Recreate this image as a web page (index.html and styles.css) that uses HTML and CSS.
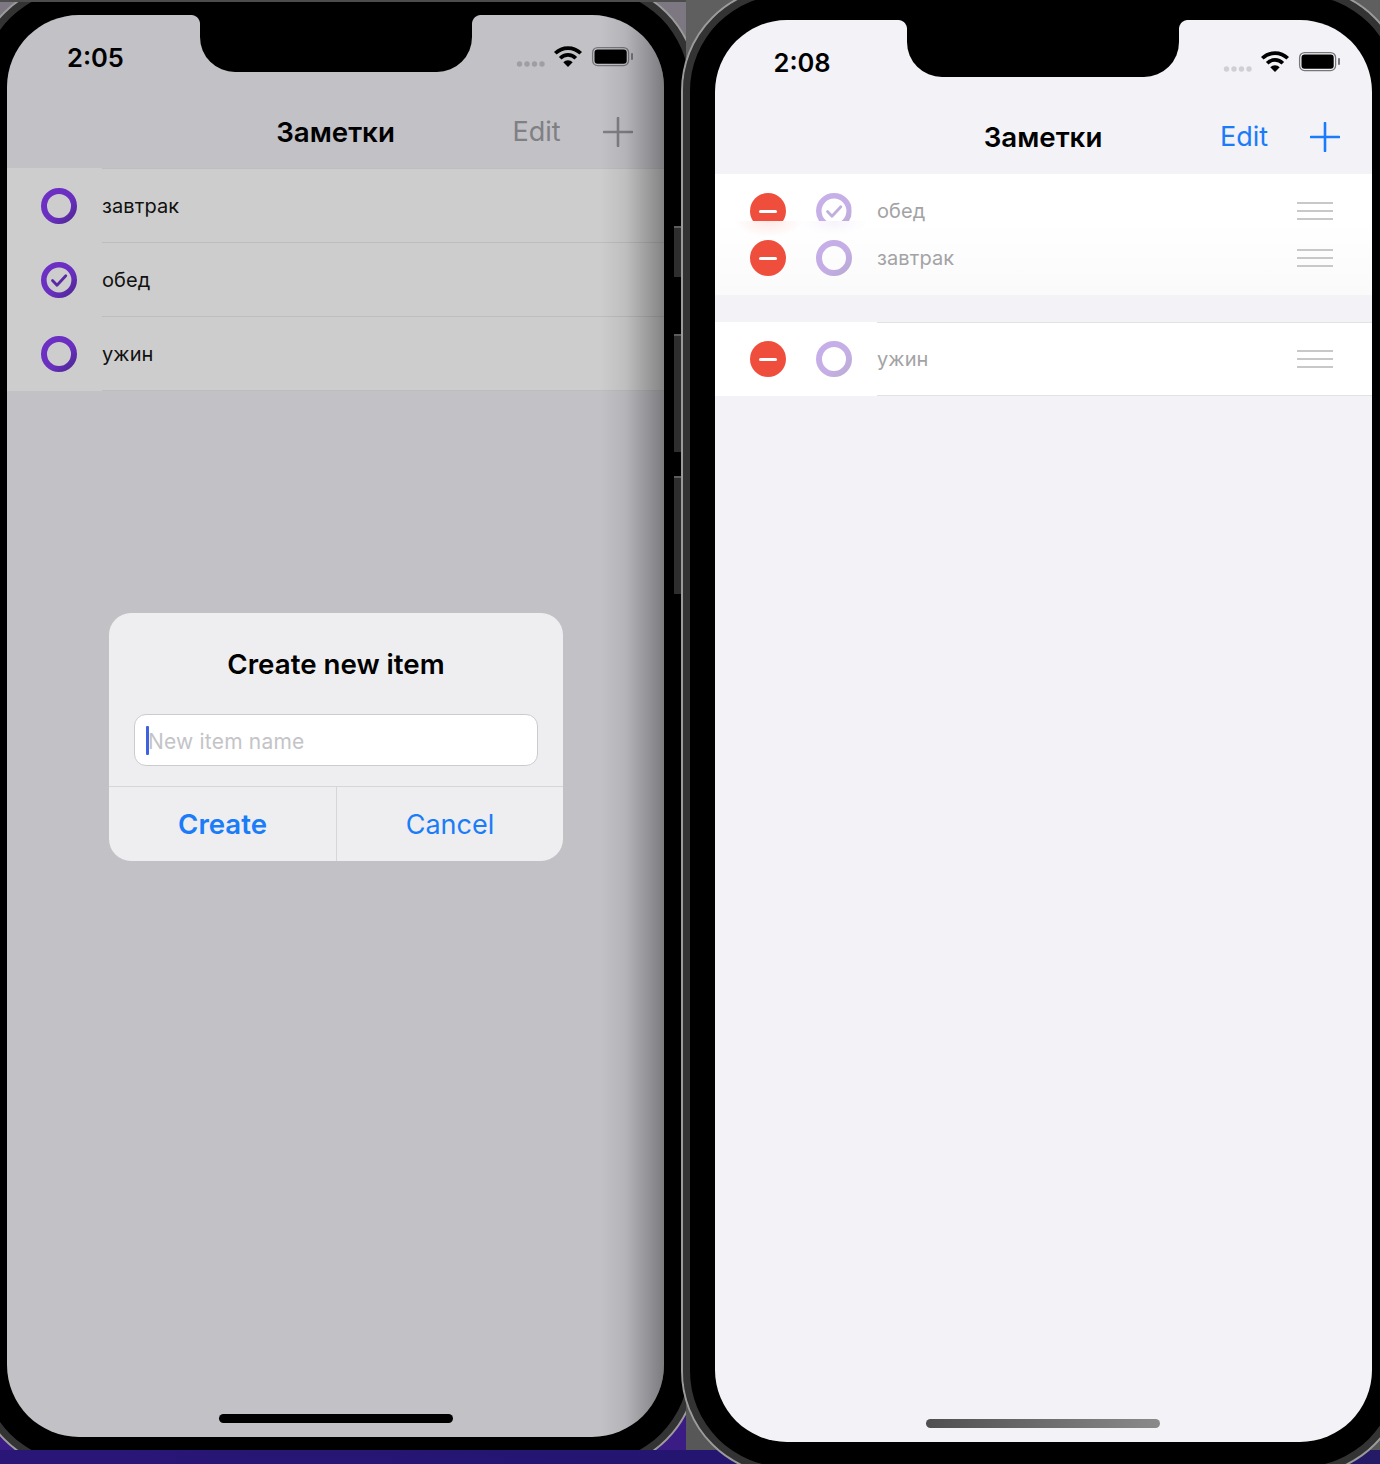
FILE: index.html
```html
<!DOCTYPE html>
<html lang="ru">
<head>
<meta charset="utf-8">
<title>Заметки</title>
<link rel="stylesheet" href="styles.css">
</head>
<body>
<svg class="defs" width="0" height="0" aria-hidden="true">
  <defs>
    <linearGradient id="ringPaint" x1="0.1" y1="0.1" x2="0.9" y2="0.9">
      <stop offset="0" stop-color="#6c30c4"/>
      <stop offset="0.6" stop-color="#6a2fc0"/>
      <stop offset="1" stop-color="#55299f"/>
    </linearGradient>
    <symbol id="ring" viewBox="0 0 36 36">
      <circle cx="18" cy="18" r="15" fill="none" stroke="url(#ringPaint)" stroke-width="6"/>
    </symbol>
    <symbol id="ringCheck" viewBox="0 0 36 36">
      <circle cx="18" cy="18" r="15.2" fill="none" stroke="url(#ringPaint)" stroke-width="5.6"/>
      <path d="M11.5 18.5L16 23.2L24.8 13.8" fill="none" stroke="#5a2aa6" stroke-width="2.8" stroke-linecap="round" stroke-linejoin="round"/>
    </symbol>
    <symbol id="plus" viewBox="0 0 30 30">
      <path d="M15 1V29M1 15H29" fill="none" stroke="currentColor" stroke-width="2.6" stroke-linecap="round"/>
    </symbol>
    <symbol id="status" viewBox="0 0 120 24">
      <g fill="currentColor">
        <circle cx="5.5" cy="20" r="2.7"/>
        <circle cx="13" cy="20" r="2.7"/>
        <circle cx="20.5" cy="20" r="2.7"/>
        <circle cx="28" cy="20" r="2.7"/>
      </g>
      <path d="M41.3 9.3A18 18 0 0 1 66.7 9.3M46.2 14.2A11 11 0 0 1 61.8 14.2" fill="none" stroke="#000" stroke-width="3.7"/>
      <path d="M54 23L49.3 18.3A6.6 6.6 0 0 1 58.7 18.3Z" fill="#000"/>
      <rect x="78.6" y="3.6" width="36" height="18" rx="5" fill="none" stroke="#77777b" stroke-width="1.3"/>
      <rect x="80.5" y="5.5" width="32.2" height="14.2" rx="3" fill="#000"/>
      <rect x="117" y="9" width="2" height="7" rx="1" fill="#77777b"/>
    </symbol>
  </defs>
</svg>

<section class="window window-left">
  <div class="phone phone-left">
    <span class="side-btn side-btn-a"></span>
    <span class="side-btn side-btn-b"></span>
    <span class="side-btn side-btn-c"></span>
    <div class="screen screen-dim">
      <div class="notch"></div>
      <header class="top">
        <div class="status">
          <span class="time">2:05</span>
          <svg class="status-icons"><use href="#status"/></svg>
        </div>
        <div class="nav">
          <h1 class="nav-title">Заметки</h1>
          <span class="nav-edit">Edit</span>
          <svg class="nav-plus"><use href="#plus"/></svg>
        </div>
      </header>
      <ul class="list list-plain">
        <li class="row"><svg class="ring"><use href="#ring"/></svg><div class="label">завтрак</div></li>
        <li class="row"><svg class="ring"><use href="#ringCheck"/></svg><div class="label">обед</div></li>
        <li class="row"><svg class="ring"><use href="#ring"/></svg><div class="label">ужин</div></li>
      </ul>
      <div class="alert">
        <h2 class="alert-title">Create new item</h2>
        <div class="field"><span class="caret"></span><span class="placeholder">New item name</span></div>
        <div class="actions">
          <button class="action action-primary">Create</button>
          <button class="action">Cancel</button>
        </div>
      </div>
      <div class="home home-dark"></div>
    </div>
  </div>
</section>

<section class="window window-right">
  <div class="phone phone-right">
    <div class="screen screen-light">
      <div class="notch"></div>
      <header class="top">
        <div class="status">
          <span class="time">2:08</span>
          <svg class="status-icons"><use href="#status"/></svg>
        </div>
        <div class="nav">
          <h1 class="nav-title">Заметки</h1>
          <span class="nav-edit">Edit</span>
          <svg class="nav-plus"><use href="#plus"/></svg>
        </div>
      </header>
      <ul class="list list-edit">
        <li class="row row-lifted">
          <div class="row-inner">
            <span class="delete"></span>
            <svg class="ring"><use href="#ringCheck"/></svg>
            <div class="label">обед<span class="grip"><i></i><i></i><i></i></span></div>
          </div>
        </li>
        <li class="row row-below">
          <span class="delete"></span>
          <svg class="ring"><use href="#ring"/></svg>
          <div class="label">завтрак<span class="grip"><i></i><i></i><i></i></span></div>
        </li>
        <li class="row row-section">
          <span class="delete"></span>
          <svg class="ring"><use href="#ring"/></svg>
          <div class="label">ужин<span class="grip"><i></i><i></i><i></i></span></div>
        </li>
      </ul>
      <div class="home home-grey"></div>
    </div>
  </div>
</section>
</body>
</html>
```
FILE: styles.css
```css
* { box-sizing: border-box; }

html, body {
  margin: 0;
  padding: 0;
  width: 1380px;
  height: 1464px;
  overflow: hidden;
}

body {
  position: relative;
  background: linear-gradient(90deg, #2a1677 0, #231570 55%, #241a66 100%);
  font-family: Inter, "Noto Sans", "Liberation Sans", sans-serif;
  color: #000;
}

.defs { position: absolute; }

/* Simulator windows on the desktop */
.window {
  position: absolute;
  top: 0;
  height: 1450px;
}

.window-left {
  left: 0;
  width: 686px;
  overflow: hidden;
  background: linear-gradient(180deg, #7d7781 0, #7d7781 90px, #3b1b84 1300px, #3b1b84 100%);
}

.window-left::after {
  content: "";
  position: absolute;
  left: 0;
  right: 0;
  top: 0;
  height: 2px;
  background: #4c4c4c;
}

.window-right {
  left: 686px;
  width: 694px;
  background: linear-gradient(180deg, #5f5f60, #575757);
}

.phone {
  position: absolute;
  width: 725px;
  height: 1490px;
  padding: 32px;
  border: 2px solid #9b9b9b;
  border-radius: 105px;
  background: #000;
  box-shadow: inset 0 0 0 7px #333;
}

.phone-left { left: -27px; top: -19px; }
.phone-right { left: -5.5px; top: -14px; }

.side-btn {
  position: absolute;
  left: 699px;
  width: 8px;
  background: #2e2e2e;
  border-top: 2px solid #5c5c5c;
}
.side-btn-a { top: 243px; height: 51px; }
.side-btn-b { top: 351px; height: 118px; }
.side-btn-c { top: 493px; height: 118px; }

/* Screen */
.screen {
  position: relative;
  width: 657px;
  height: 1422px;
  border-radius: 72px;
  overflow: hidden;
  display: flex;
  flex-direction: column;
}

.screen-dim { background: #c2c1c6; }
.screen-light { background: #f2f2f7; }

.screen-dim::after {
  content: "";
  position: absolute;
  top: 0;
  bottom: 0;
  right: 0;
  width: 64px;
  background: linear-gradient(90deg, rgba(0,0,0,0), rgba(0,0,0,.07) 40%, rgba(0,0,0,.36));
}

.notch {
  position: absolute;
  top: 0;
  left: 193px;
  width: 272px;
  height: 57px;
  background: #000;
  border-radius: 0 0 35px 35px;
}

.screen-light .notch { left: 192.5px; }

.notch::before,
.notch::after {
  content: "";
  position: absolute;
  top: 0;
  width: 9px;
  height: 9px;
}
.notch::before {
  left: -9px;
  background: radial-gradient(circle at 0 100%, rgba(0,0,0,0) 8.5px, #000 9.5px);
}
.notch::after {
  right: -9px;
  background: radial-gradient(circle at 100% 100%, rgba(0,0,0,0) 8.5px, #000 9.5px);
}

.top { flex: none; height: 154px; }

.status {
  height: 84px;
  display: flex;
  justify-content: space-between;
  padding: 25px 30px 0 60px;
}

.time {
  font-size: 25.5px;
  font-weight: 600;
  line-height: 36px;
}

.screen-light .status { padding: 25px 31px 0 59px; }

.status-icons {
  width: 120px;
  height: 24px;
  margin-top: 4px;
}

.screen-dim .status-icons { color: #9f9ea3; }
.screen-light .status-icons { color: #d0d0d4; }

.nav {
  position: relative;
  height: 66px;
  display: flex;
  align-items: center;
  justify-content: center;
}

.nav-title {
  margin: 0;
  font-size: 27.7px;
  font-weight: 600;
  line-height: 34px;
}

.nav-edit {
  position: absolute;
  left: 505.5px;
  top: 16px;
  font-size: 27px;
  line-height: 34px;
}

.nav-plus {
  position: absolute;
  left: 595.5px;
  top: 18px;
  width: 30px;
  height: 30px;
}

.screen-dim .nav-edit,
.screen-dim .nav-plus { color: #807f83; }
.screen-light .nav-edit,
.screen-light .nav-plus { color: #1a7cf8; }

/* Lists */
.list {
  list-style: none;
  margin: 0;
  padding: 0;
}

.row {
  display: flex;
  align-items: center;
  height: 74px;
}

.label {
  flex: 1;
  align-self: stretch;
  display: flex;
  align-items: center;
  justify-content: space-between;
  font-size: 20px;
  line-height: 20px;
  letter-spacing: 0.1px;
}

.ring {
  flex: none;
  width: 36px;
  height: 36px;
}

.list-plain .row { background: #cdcdcd; padding-left: 34px; }
.list-plain .ring { margin-right: 25px; }
.list-plain .label { border-bottom: 1px solid #bdbdbd; color: #111; }
.list-plain .row:first-child { margin-top: -1px; height: 75px; }
.list-plain .row:first-child .label { border-top: 1px solid #bdbdbd; }

.list-edit .row,
.list-edit .row-inner { padding-left: 35.5px; }
.list-edit .row { background: #fff; }
.list-edit .ring { margin: 0 25.5px 0 29.5px; opacity: .38; }
.list-edit .label { color: #a3a3a5; padding-right: 38.5px; }

.list-edit .row-lifted {
  display: block;
  height: 47px;
  padding-left: 0;
}

.row-inner {
  display: flex;
  align-items: center;
  height: 74px;
}

/* The lifted row's icons are cut by the row edge while it is dragged */
.row-inner .delete,
.row-inner .ring { clip-path: inset(0 0 8px 0); }

.list-edit .row-below {
  background:
    radial-gradient(ellipse 34px 16px at 53.5px 0, rgba(240,78,62,.13), rgba(240,78,62,0)),
    radial-gradient(ellipse 34px 14px at 118.5px 0, rgba(110,50,190,.06), rgba(110,50,190,0)),
    linear-gradient(180deg, #fff, #fafafb);
  margin-bottom: 27px;
}

.list-edit .row-section .label {
  border-top: 1px solid #e2e2e5;
  border-bottom: 1px solid #e2e2e5;
}

.delete {
  flex: none;
  position: relative;
  width: 36px;
  height: 36px;
  border-radius: 50%;
  background: #f04e3d;
}

.delete::after {
  content: "";
  position: absolute;
  left: 9px;
  top: 16.5px;
  width: 18px;
  height: 3px;
  border-radius: 2px;
  background: #fff;
}

.grip {
  display: flex;
  flex-direction: column;
  gap: 6px;
  width: 36px;
}

.grip i {
  display: block;
  height: 2px;
  background: #c8c8ca;
}

/* Alert */
.alert {
  position: absolute;
  left: 102px;
  top: 598px;
  width: 454px;
  height: 248px;
  border-radius: 22px;
  background: #eeeef0;
  display: flex;
  flex-direction: column;
}

.alert-title {
  margin: 0;
  padding-top: 34px;
  height: 101px;
  text-align: center;
  font-size: 27.7px;
  font-weight: 600;
  line-height: 34px;
}

.field {
  margin: 0 25px;
  height: 52px;
  display: flex;
  align-items: center;
  padding-left: 11px;
  background: #fff;
  border: 1px solid #cbcbce;
  border-radius: 12px;
}

.caret {
  flex: none;
  width: 3px;
  height: 29px;
  background: #3f62e0;
  border-radius: 1px;
}

.placeholder {
  margin: 4px 0 0 -1px;
  font-size: 21px;
  line-height: 26px;
  color: #c4c4c7;
  letter-spacing: 0.2px;
}

.actions {
  margin-top: 20px;
  flex: 1;
  display: grid;
  grid-template-columns: 1fr 1fr;
  border-top: 1px solid #d6d6d8;
}

.action {
  border: 0;
  padding: 0;
  background: none;
  font: 400 27px Inter, "Noto Sans", sans-serif;
  color: #1a7cf8;
}

.action + .action { border-left: 1px solid #d6d6d8; }
.action-primary { font-size: 27.6px; font-weight: 600; }

/* Home indicator */
.home {
  position: absolute;
  left: 212px;
  bottom: 14px;
  width: 234px;
  height: 9px;
  border-radius: 5px;
}

.screen-light .home { left: 211.5px; }
.home-dark { background: #000; }
.home-grey { background: linear-gradient(90deg, #4f4f4f, #8a8a8a); }
```
